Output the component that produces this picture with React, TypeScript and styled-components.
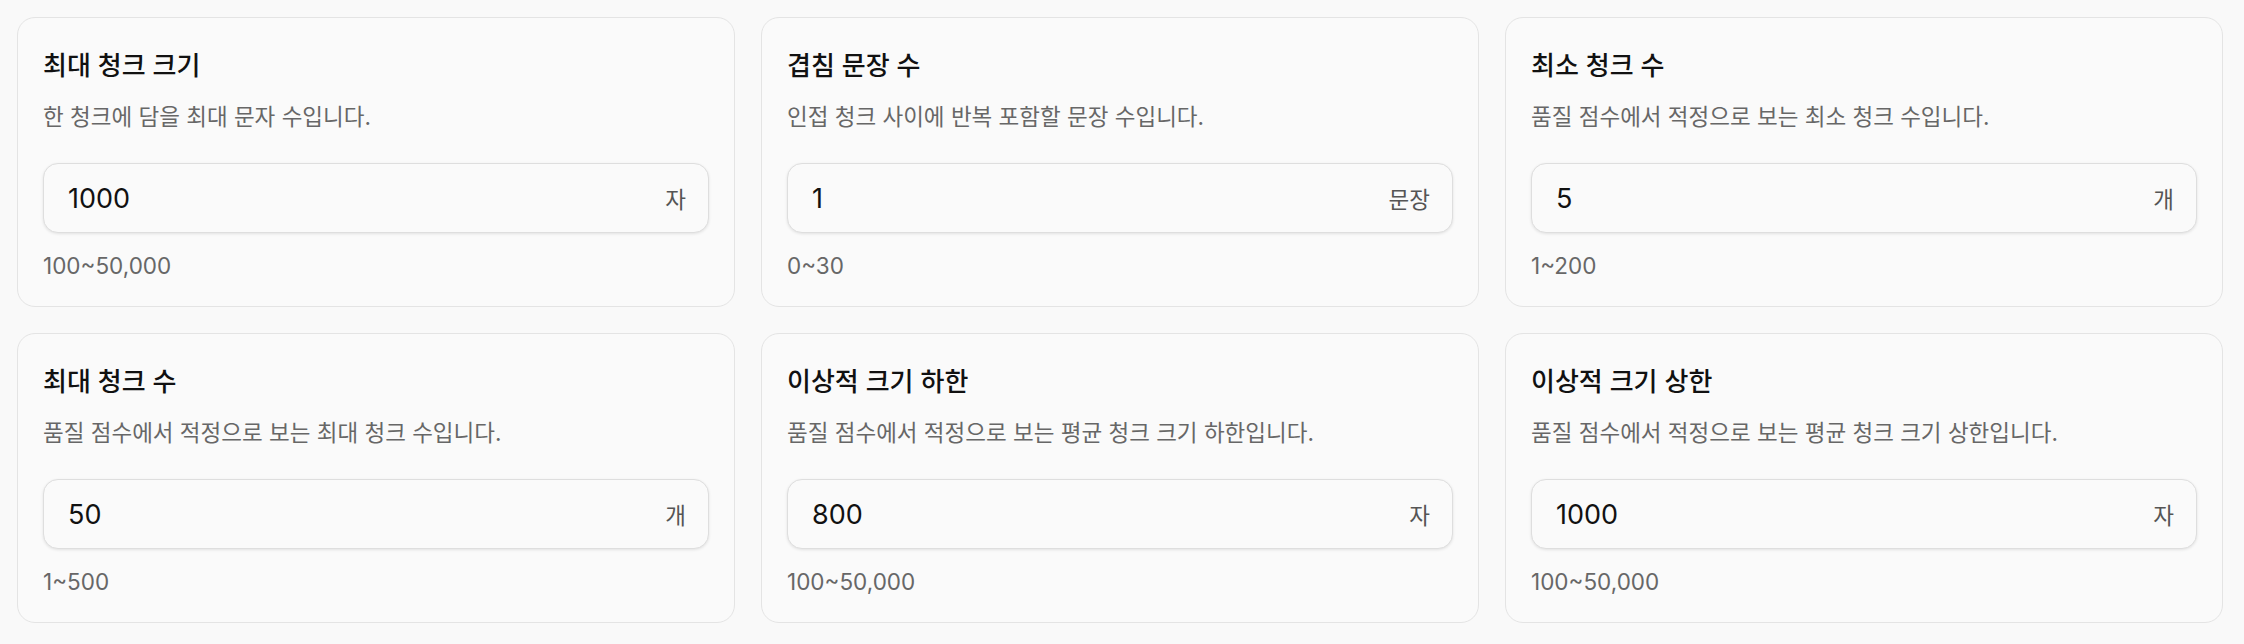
import React from "react";
import styled, { createGlobalStyle } from "styled-components";

interface Setting {
  id: string;
  title: string;
  description: string;
  value: string;
  unit: string;
  range: string;
}

const settings: Setting[] = [
  {
    id: "maxChunkSize",
    title: "최대 청크 크기",
    description: "한 청크에 담을 최대 문자 수입니다.",
    value: "1000",
    unit: "자",
    range: "100~50,000",
  },
  {
    id: "overlap",
    title: "겹침 문장 수",
    description: "인접 청크 사이에 반복 포함할 문장 수입니다.",
    value: "1",
    unit: "문장",
    range: "0~30",
  },
  {
    id: "minChunks",
    title: "최소 청크 수",
    description: "품질 점수에서 적정으로 보는 최소 청크 수입니다.",
    value: "5",
    unit: "개",
    range: "1~200",
  },
  {
    id: "maxChunks",
    title: "최대 청크 수",
    description: "품질 점수에서 적정으로 보는 최대 청크 수입니다.",
    value: "50",
    unit: "개",
    range: "1~500",
  },
  {
    id: "idealMin",
    title: "이상적 크기 하한",
    description: "품질 점수에서 적정으로 보는 평균 청크 크기 하한입니다.",
    value: "800",
    unit: "자",
    range: "100~50,000",
  },
  {
    id: "idealMax",
    title: "이상적 크기 상한",
    description: "품질 점수에서 적정으로 보는 평균 청크 크기 상한입니다.",
    value: "1000",
    unit: "자",
    range: "100~50,000",
  },
];

const SettingCard = ({ setting }: { setting: Setting }) => {
  return (
    <Card>
      <Title>{setting.title}</Title>
      <Description>{setting.description}</Description>
      <Field>
        <NumberInput defaultValue={setting.value} inputMode="numeric" />
        <Unit>{setting.unit}</Unit>
      </Field>
      <Range>{setting.range}</Range>
    </Card>
  );
};

const App = () => {
  return (
    <>
      <GlobalStyle />
      <Grid>
        {settings.map((setting) => (
          <SettingCard key={setting.id} setting={setting} />
        ))}
      </Grid>
    </>
  );
};

export default App;

const GlobalStyle = createGlobalStyle`
  html, body {
    margin: 0;
    background: #f9f9f9;
  }

  body {
    font-family: Inter, "Noto Sans CJK KR", sans-serif;
    color: #111;
  }

  * {
    box-sizing: border-box;
  }
`;

const Grid = styled.div`
  display: grid;
  grid-template-columns: repeat(3, 1fr);
  gap: 26px;
  padding: 17px 21px 0 17px;
`;

const Card = styled.section`
  display: flex;
  flex-direction: column;
  height: 290px;
  padding: 30px 25px 24px;
  border: 1px solid #e4e4e4;
  border-radius: 18px;
  background: #fafafa;
`;

const Title = styled.h3`
  margin: 0;
  font-size: 26px;
  line-height: 36px;
  font-weight: 500;
  color: #111;
`;

const Description = styled.p`
  margin: 18px 0 0;
  font-size: 22.5px;
  line-height: 30px;
  color: #676767;
`;

const Field = styled.div`
  display: flex;
  align-items: center;
  height: 70px;
  margin-top: 31px;
  padding: 0 22px 0 24px;
  border: 1.5px solid #dedede;
  border-radius: 15px;
  background: #fafafa;
  box-shadow: 0 1px 3px rgba(0, 0, 0, 0.1);
`;

const NumberInput = styled.input`
  flex: 1;
  min-width: 0;
  padding: 0;
  border: none;
  outline: none;
  background: transparent;
  font-family: Inter, "Noto Sans CJK KR", sans-serif;
  font-size: 27px;
  color: #111;
`;

const Unit = styled.span`
  font-size: 22.5px;
  color: #555;
`;

const Range = styled.div`
  margin-top: 18px;
  font-size: 22.5px;
  line-height: 30px;
  color: #676767;
`;
